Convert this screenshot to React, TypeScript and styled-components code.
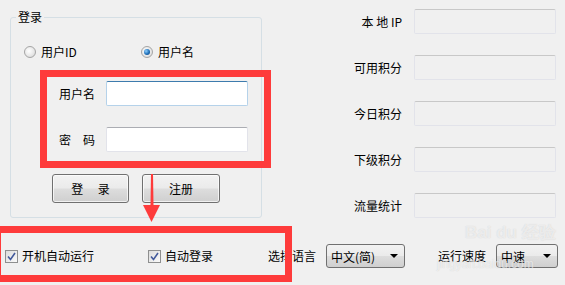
import React from 'react';
import styled, { createGlobalStyle } from 'styled-components';

const GlobalStyle = createGlobalStyle`
  html, body {
    margin: 0;
    padding: 0;
    background: #f0f0f0;
  }
  * {
    box-sizing: border-box;
  }
`;

const FONT = `"Noto Sans CJK SC", "DejaVu Sans", sans-serif`;
const RED = '#fe3b3b';

const Window = styled.div`
  position: relative;
  width: 565px;
  height: 285px;
  overflow: hidden;
  background: #f0f0f0;
  font-family: ${FONT};
  font-size: 12px;
  color: #000;
  display: flex;
  flex-direction: column;
`;

const TopArea = styled.div`
  display: flex;
  align-items: flex-start;
  height: 218px;
`;

const GroupBox = styled.div`
  position: relative;
  flex-shrink: 0;
  margin: 17px 0 0 10px;
  width: 252px;
  height: 201px;
  border: 1px solid #d5dfe5;
  border-radius: 3px;
  padding: 27px 0 0 13px;
  display: flex;
  flex-direction: column;
`;

const GroupTitle = styled.span`
  position: absolute;
  top: -9px;
  left: 5px;
  padding: 0 2px;
  background: #f0f0f0;
  line-height: 16px;
`;

const RadioRow = styled.div`
  display: flex;
  height: 14px;
  align-items: center;
`;

const RadioItem = styled.label<{ $w?: number }>`
  display: flex;
  align-items: center;
  gap: 5px;
  width: ${({ $w }) => ($w ? `${$w}px` : 'auto')};
  line-height: 14px;
  white-space: nowrap;
`;

const RadioDot = styled.span<{ $checked?: boolean }>`
  width: 12px;
  height: 12px;
  border-radius: 50%;
  border: 1px solid #a5a5a5;
  background: radial-gradient(circle at 40% 40%, #ffffff 0%, #e6e6e6 60%, #cfcfcf 100%);
  display: flex;
  align-items: center;
  justify-content: center;
  &::after {
    content: '';
    display: ${({ $checked }) => ($checked ? 'block' : 'none')};
    width: 6px;
    height: 6px;
    border-radius: 50%;
    background: radial-gradient(circle at 35% 35%, #8fd0ff 0%, #1f6fb8 55%, #0b3f7a 100%);
  }
`;

const FormRow = styled.div<{ $top: number }>`
  display: flex;
  align-items: center;
  margin-top: ${({ $top }) => $top}px;
  padding-left: 35px;
`;

const FieldLabel = styled.span`
  width: 47px;
  line-height: 14px;
  white-space: nowrap;
`;

const TextInput = styled.div<{ $focused?: boolean }>`
  width: 142px;
  height: 25px;
  background: #fff;
  border: 1px solid ${({ $focused }) => ($focused ? '#b5d2ea' : '#e2e3ea')};
  border-top-color: ${({ $focused }) => ($focused ? '#3d7bad' : '#abadb3')};
  border-radius: 2px;
`;

const ButtonRow = styled.div`
  display: flex;
  gap: 13px;
  margin-top: 22px;
  padding-left: 28px;
`;

const Button = styled.div<{ $w: number }>`
  width: ${({ $w }) => $w}px;
  height: 29px;
  border: 1px solid #707070;
  border-radius: 3px;
  background: linear-gradient(#f2f2f2 0%, #ebebeb 48%, #dddddd 52%, #cfcfcf 100%);
  box-shadow: inset 0 0 0 1px rgba(255, 255, 255, 0.7);
  display: flex;
  align-items: center;
  justify-content: center;
  font-size: 12px;
  white-space: pre;
`;

const RightCol = styled.div`
  flex: 1;
  padding: 9px 9px 0 0;
  display: flex;
  flex-direction: column;
  gap: 21px;
`;

const InfoRow = styled.div`
  display: flex;
  justify-content: flex-end;
  align-items: center;
  gap: 12px;
`;

const InfoLabel = styled.span`
  line-height: 14px;
  white-space: pre;
`;

const InfoField = styled.div`
  width: 142px;
  height: 25px;
  background: #f0f0f0;
  border: 1px solid #e2e3ea;
  border-top-color: #c8c8c8;
  border-radius: 2px;
`;

const BottomRow = styled.div`
  display: flex;
  align-items: center;
  height: 24px;
  margin-top: 26px;
  padding-left: 5px;
  white-space: nowrap;
  & > * {
    flex-shrink: 0;
  }
`;

const CheckItem = styled.label<{ $w: number }>`
  display: flex;
  align-items: center;
  gap: 4px;
  width: ${({ $w }) => $w}px;
  font-size: 12px;
  line-height: 14px;
`;

const CheckBox = styled.span`
  width: 13px;
  height: 13px;
  border: 1px solid #8e8f8f;
  background: linear-gradient(135deg, #dcdcdc, #fafafa);
  display: flex;
  align-items: center;
  justify-content: center;
`;

const ComboLabel = styled.span<{ $left?: number }>`
  margin-left: ${({ $left }) => $left ?? 0}px;
  margin-right: 10px;
  font-size: 12px;
  line-height: 14px;
`;

const Combo = styled.div<{ $w: number }>`
  width: ${({ $w }) => $w}px;
  height: 24px;
  border: 1px solid #707070;
  border-radius: 3px;
  background: linear-gradient(#f2f2f2 0%, #ebebeb 48%, #dddddd 52%, #cfcfcf 100%);
  display: flex;
  align-items: center;
  justify-content: space-between;
  padding: 0 6px 0 4px;
  font-size: 12px;
`;

const ComboArrow = styled.span`
  width: 0;
  height: 0;
  border-left: 4px solid transparent;
  border-right: 4px solid transparent;
  border-top: 4px solid #000;
`;

const Annotation = styled.div<{ $x: number; $y: number; $w: number; $h: number }>`
  position: absolute;
  left: ${({ $x }) => $x}px;
  top: ${({ $y }) => $y}px;
  width: ${({ $w }) => $w}px;
  height: ${({ $h }) => $h}px;
  border: 7px solid ${RED};
  pointer-events: none;
`;

const ArrowSvg = styled.svg`
  position: absolute;
  left: 140px;
  top: 172px;
`;

const Watermark = styled.div`
  position: absolute;
  left: 437px;
  top: 222px;
  width: 128px;
  display: flex;
  flex-direction: column;
  align-items: flex-start;
  white-space: nowrap;
  color: rgba(255, 255, 255, 0.6);
  text-shadow: 0 0 1px rgba(150, 150, 150, 0.4);
  font-family: "Liberation Sans", sans-serif;
  pointer-events: none;
`;

const WatermarkBig = styled.span`
  font-size: 17px;
  font-weight: bold;
  line-height: 22px;
  margin-left: 28px;
`;

const WatermarkSmall = styled.span`
  font-size: 12px;
  line-height: 14px;
  margin-top: 13px;
`;

const infoRows = ['本 地 IP', '可用积分', '今日积分', '下级积分', '流量统计'];

const Check = () => (
  <CheckBox>
    <svg width="9" height="9" viewBox="0 0 9 9">
      <path d="M1 4.5 L3.5 7.5 L8 1" stroke="#42599b" strokeWidth="1.6" fill="none" />
    </svg>
  </CheckBox>
);

export default function App() {
  return (
    <>
      <GlobalStyle />
      <Window>
        <TopArea>
          <GroupBox>
            <GroupTitle>登录</GroupTitle>
            <RadioRow>
              <RadioItem $w={117}>
                <RadioDot />
                用户ID
              </RadioItem>
              <RadioItem>
                <RadioDot $checked />
                用户名
              </RadioItem>
            </RadioRow>
            <FormRow $top={22}>
              <FieldLabel>用户名</FieldLabel>
              <TextInput $focused />
            </FormRow>
            <FormRow $top={21}>
              <FieldLabel>密　码</FieldLabel>
              <TextInput />
            </FormRow>
            <ButtonRow>
              <Button $w={77}>{'登　 录'}</Button>
              <Button $w={78}>注册</Button>
            </ButtonRow>
          </GroupBox>
          <RightCol>
            {infoRows.map((label) => (
              <InfoRow key={label}>
                <InfoLabel>{label}</InfoLabel>
                <InfoField />
              </InfoRow>
            ))}
          </RightCol>
        </TopArea>
        <BottomRow>
          <CheckItem $w={143}>
            <Check />
            开机自动运行
          </CheckItem>
          <CheckItem $w={120}>
            <Check />
            自动登录
          </CheckItem>
          <ComboLabel>选择语言</ComboLabel>
          <Combo $w={79}>
            中文(简)
            <ComboArrow />
          </Combo>
          <ComboLabel $left={33}>运行速度</ComboLabel>
          <Combo $w={62}>
            中速
            <ComboArrow />
          </Combo>
        </BottomRow>

        <Watermark>
          <WatermarkBig>Bai du 经验</WatermarkBig>
          <WatermarkSmall>jingyan.baidu.com</WatermarkSmall>
        </Watermark>

        <Annotation $x={40} $y={70} $w={231} $h={98} />
        <Annotation $x={-6} $y={226} $w={298} $h={56} />
        <ArrowSvg width="24" height="52" viewBox="0 0 24 52">
          <path d="M11 2 L13 2 L13.5 33 L10.5 33 Z" fill={RED} />
          <path d="M3 33 L20 33 L11.5 50 Z" fill={RED} />
        </ArrowSvg>
      </Window>
    </>
  );
}
